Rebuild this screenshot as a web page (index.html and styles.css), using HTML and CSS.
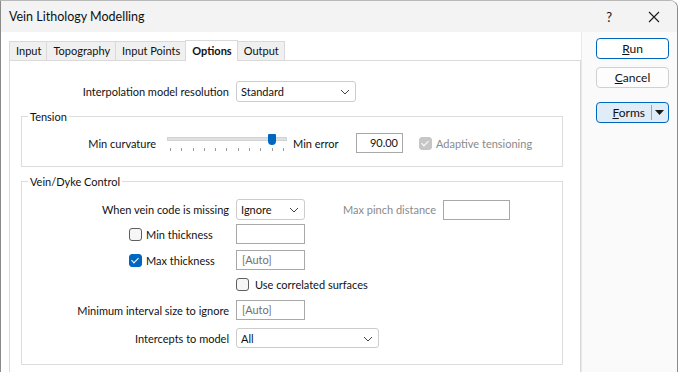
FILE: index.html
```html
<!DOCTYPE html>
<html lang="en">
<head>
    <meta charset="UTF-8">
    <title>Vein Lithology Modelling</title>
    <link rel="stylesheet" href="styles.css">
</head>
<body>

<div class="window">
    <div class="titlebar">
        <span class="title">Vein Lithology Modelling</span>
        <span class="help">?</span>
        <svg class="close" width="12" height="12" viewBox="0 0 12 12">
            <path d="M1 1 L11 11 M11 1 L1 11" stroke="#1a1a1a" stroke-width="1.1" fill="none"/>
        </svg>
    </div>

    <div class="body">
        <div class="main">
            <div class="tabs">
                <div class="tab">Input</div>
                <div class="tab">Topography</div>
                <div class="tab">Input Points</div>
                <div class="tab active">Options</div>
                <div class="tab">Output</div>
            </div>

            <div class="panel">
                <div class="row first">
                    <label class="lbl wide">Interpolation model resolution</label>
                    <div class="select w-std"><span>Standard</span><svg class="chev" width="10" height="6" viewBox="0 0 10 6"><path d="M1 1 L5 5 L9 1" stroke="#444" fill="none"/></svg></div>
                </div>

                <fieldset class="group tension">
                    <legend>Tension</legend>
                    <div class="row">
                        <label class="lbl slider-lbl">Min curvature</label>
                        <div class="slider">
                            <div class="track"></div>
                            <div class="thumb"></div>
                            <div class="ticks">
                                <i></i><i></i><i></i><i></i><i></i><i></i><i></i><i></i><i></i><i></i><i></i>
                            </div>
                        </div>
                        <span class="after-slider">Min error</span>
                        <div class="input num">90.00</div>
                        <span class="check disabled checked"></span>
                        <span class="muted">Adaptive tensioning</span>
                    </div>
                </fieldset>

                <fieldset class="group vein">
                    <legend>Vein/Dyke Control</legend>
                    <div class="row r1">
                        <label class="lbl">When vein code is missing</label>
                        <div class="select w-ign"><span>Ignore</span><svg class="chev" width="10" height="6" viewBox="0 0 10 6"><path d="M1 1 L5 5 L9 1" stroke="#444" fill="none"/></svg></div>
                        <span class="muted pinch">Max pinch distance</span>
                        <div class="input w-pinch"></div>
                    </div>
                    <div class="row r2">
                        <label class="lbl checklbl"><span class="check"></span>Min thickness</label>
                        <div class="input w-ign"></div>
                    </div>
                    <div class="row r3">
                        <label class="lbl checklbl"><span class="check checked"></span>Max thickness</label>
                        <div class="input w-ign auto">[Auto]</div>
                    </div>
                    <div class="row r4">
                        <span class="lbl"></span>
                        <label class="checklbl"><span class="check"></span>Use correlated surfaces</label>
                    </div>
                    <div class="row r5">
                        <label class="lbl">Minimum interval size to ignore</label>
                        <div class="input w-ign auto">[Auto]</div>
                    </div>
                    <div class="row r6">
                        <label class="lbl">Intercepts to model</label>
                        <div class="select w-all"><span>All</span><svg class="chev" width="10" height="6" viewBox="0 0 10 6"><path d="M1 1 L5 5 L9 1" stroke="#444" fill="none"/></svg></div>
                    </div>
                </fieldset>
            </div>
        </div>

        <div class="side">
            <button class="btn default"><u>R</u>un</button>
            <button class="btn"><u>C</u>ancel</button>
            <div class="btn split">
                <span class="split-text"><u>F</u>orms</span>
                <span class="split-sep"></span>
                <svg width="9" height="5" viewBox="0 0 9 5"><path d="M0 0 H9 L4.5 5 Z" fill="#1a1a1a"/></svg>
            </div>
        </div>
    </div>
</div>

</body>
</html>
```

FILE: styles.css
```css
* {
    box-sizing: border-box;
}

body {
    margin: 0;
    font-family: Lato, "Noto Sans", sans-serif;
    font-size: 11px;
    color: #111111;
    background-color: #ffffff;
}

.window {
    width: 678px;
    height: 372px;
    overflow: hidden;
    border-left: 1px solid #8a8a8a;
    border-right: 1px solid #8a8a8a;
    border-top: 1px solid #b8b8b8;
    border-top-right-radius: 8px;
    background-color: #fafafa;
}

/* title bar */
.titlebar {
    height: 31px;
    display: flex;
    align-items: center;
    padding-left: 8px;
    background-color: #f3f3f3;
}

.title {
    flex: 1;
    font-size: 12.5px;
}

.help {
    font-size: 13px;
    margin-right: 36px;
}

.close {
    margin-right: 17px;
}

.body {
    display: flex;
}

/* tabs + panel */
.main {
    width: 581px;
    padding: 7px 0 0 8px;
    background-color: #ffffff;
    border-right: 1px solid #e8e8e8;
}

.tabs {
    display: flex;
    align-items: flex-end;
    height: 21px;
}

.tab {
    height: 19px;
    line-height: 18px;
    padding: 0 5px 0 6px;
    background-color: #f0f0f0;
    border: 1px solid #d9d9d9;
    border-bottom: none;
    margin-right: -1px;
    white-space: nowrap;
}

.tab.active {
    height: 21px;
    line-height: 20px;
    font-weight: bold;
    background-color: #ffffff;
    position: relative;
    z-index: 1;
    margin-bottom: -1px;
}

.panel {
    height: 320px;
    border: 1px solid #d9d9d9;
    padding-top: 20px;
}

.row {
    display: flex;
    align-items: center;
    white-space: nowrap;
}

.lbl {
    width: 219px;
    flex-shrink: 0;
    text-align: right;
    padding-right: 7px;
}

.lbl.wide {
    width: 226px;
}

/* groups */
.group {
    margin: 0 17px 0 11px;
    padding: 0;
    border: 1px solid #dcdcdc;
}

.group legend {
    margin-left: 6px;
    padding: 0 2px;
}

.tension {
    margin-top: 8px;
    height: 57px;
}

.tension .row {
    margin-top: 10px;
}

.vein {
    margin-top: 8px;
    height: 190px;
}

.vein .lbl {
    width: 214px;
}

.r1 { margin-top: 11px; }
.r2 { margin-top: 4px; }
.r3 { margin-top: 6px; }
.r4 { margin-top: 8px; }
.r5 { margin-top: 9px; }
.r6 { margin-top: 8px; }

.checklbl {
    display: flex;
    align-items: center;
    text-align: left;
    padding-left: 107px;
}

.r4 .checklbl {
    padding-left: 0;
}

/* slider */
.slider-lbl {
    width: 145px;
    padding-right: 11px;
}

.slider {
    position: relative;
    width: 120px;
    height: 20px;
}

.track {
    position: absolute;
    left: 0;
    right: 0;
    top: 4px;
    height: 4px;
    background-color: #e1e1e1;
    border: 1px solid #d2d2d2;
}

.thumb {
    position: absolute;
    left: 101px;
    top: 1px;
    width: 8px;
    height: 11px;
    background-color: #0067c0;
    border-radius: 1px 1px 4px 4px;
}

.ticks {
    position: absolute;
    left: 3px;
    right: 3px;
    top: 15px;
    display: flex;
    justify-content: space-between;
}

.ticks i {
    width: 1px;
    height: 3px;
    background-color: #9a9a9a;
}

.after-slider {
    margin-left: 6px;
    width: 63px;
}

/* controls */
.select {
    height: 21px;
    display: flex;
    align-items: center;
    justify-content: space-between;
    padding: 0 5px 0 4px;
    border: 1px solid #cccccc;
    border-radius: 3px;
    background-color: #ffffff;
}

.chev {
    margin-top: 1px;
}

.w-std { width: 120px; }
.w-ign { width: 69px; }
.w-all { width: 143px; height: 20px; }
.w-pinch { width: 67px; }

.input {
    height: 20px;
    border: 1px solid #a8a8a8;
    background-color: #ffffff;
    padding: 0 5px;
    line-height: 18px;
}

.num {
    width: 47px;
    text-align: right;
    padding-right: 4px;
}

.auto {
    color: #6f6f6f;
}

.muted {
    color: #8a8a8a;
}

.pinch {
    margin-left: 38px;
    width: 100px;
}

/* checkboxes */
.check {
    width: 13px;
    height: 13px;
    flex-shrink: 0;
    margin-right: 4px;
    border: 1px solid #5e5e5e;
    border-radius: 3px;
    background-color: #f6f6f6;
    position: relative;
}

.check.checked {
    background-color: #0067c0;
    border-color: #0067c0;
}

.check.checked::after {
    content: "";
    position: absolute;
    left: 3px;
    top: 1px;
    width: 3px;
    height: 6px;
    border: solid #ffffff;
    border-width: 0 1px 1px 0;
    transform: rotate(45deg);
}

.check.disabled {
    background-color: #c6c6c6;
    border-color: #c6c6c6;
    margin-left: 16px;
}

.r4 .check {
    margin-right: 6px;
}

/* side buttons */
.side {
    display: flex;
    flex-direction: column;
    padding: 6px 0 0 14px;
}

.btn {
    width: 73px;
    height: 21px;
    font-family: inherit;
    font-size: 12px;
    color: #111111;
    background-color: #fdfdfd;
    border: 1px solid #d0d0d0;
    border-radius: 4px;
    margin-bottom: 8px;
    padding: 0;
}

.btn.default {
    border-color: #0067c0;
    background-color: #ffffff;
}

.btn.split {
    margin-top: 6px;
    display: flex;
    align-items: center;
    background-color: #e0ecf8;
    border-color: #0067c0;
    padding-right: 4px;
}

.split-text {
    flex: 1;
    text-align: right;
    padding-right: 6px;
}

.split-sep {
    width: 1px;
    height: 15px;
    background-color: #8aa8c8;
    margin-right: 3px;
}
```
